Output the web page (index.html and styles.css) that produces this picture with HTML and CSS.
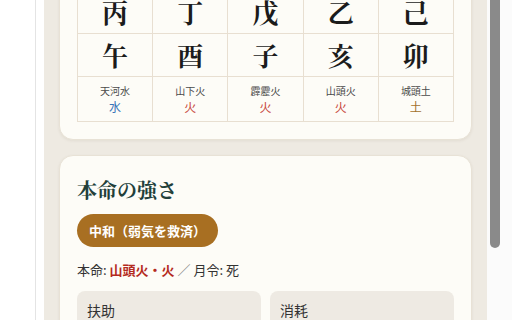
FILE: index.html
```html
<!DOCTYPE html>
<html lang="ja">
<head>
<meta charset="utf-8">
<link rel="stylesheet" href="styles.css">
</head>
<body>
<div class="app">
  <div class="side"></div>
  <div class="spacer"></div>
  <main class="main">
    <div class="stack">
      <section class="card">
        <table class="pillars">
          <tr class="big">
            <td>丙</td><td>丁</td><td>戊</td><td>乙</td><td>己</td>
          </tr>
          <tr class="big">
            <td>午</td><td>酉</td><td>子</td><td>亥</td><td>卯</td>
          </tr>
          <tr class="nayin">
            <td><span class="name">天河水</span><span class="el water">水</span></td>
            <td><span class="name">山下火</span><span class="el fire">火</span></td>
            <td><span class="name">霹靂火</span><span class="el fire">火</span></td>
            <td><span class="name">山頭火</span><span class="el fire">火</span></td>
            <td><span class="name">城頭土</span><span class="el earth">土</span></td>
          </tr>
        </table>
      </section>
      <section class="card">
        <h2 class="title">本命の強さ</h2>
        <div class="badge">中和（弱気を救済）</div>
        <p class="meta">本命: <strong class="hl">山頭火・火</strong> <span class="sep">／</span> 月令: 死</p>
        <div class="boxes">
          <div class="box">扶助</div>
          <div class="box">消耗</div>
        </div>
      </section>
    </div>
  </main>
  <div class="track"><div class="thumb"></div></div>
</div>
</body>
</html>
```
FILE: styles.css
```css
html, body {
  margin: 0;
  padding: 0;
  background: #ffffff;
}
body {
  font-family: "Noto Sans CJK JP", "Noto Sans", sans-serif;
  color: #333;
  width: 512px;
  height: 320px;
  overflow: hidden;
}
.app {
  display: flex;
  height: 320px;
}
.side {
  width: 35px;
  flex: none;
  border-right: 1px solid #e4e4e4;
  background: #fff;
}
.spacer {
  width: 8px;
  flex: none;
  background: #fff;
}
.main {
  width: 443px;
  flex: none;
  background: #eeeae2;
  overflow: hidden;
  padding: 0 15px;
  box-sizing: border-box;
}
.stack {
  display: flex;
  flex-direction: column;
  gap: 15px;
  margin-top: -28px;
}
.card {
  background: #fdfcf7;
  border: 1px solid #e8e2d6;
  border-radius: 14px;
  padding: 17px;
  box-shadow: 0 1px 3px rgba(90, 70, 40, 0.08);
}
.pillars {
  width: 100%;
  border-collapse: collapse;
  table-layout: fixed;
}
.pillars td {
  border: 1px solid #e8dfd1;
  text-align: center;
  padding: 0;
}
.big td {
  font-family: "Noto Serif CJK JP", "Noto Serif CJK SC", "Liberation Serif", serif;
  font-size: 26px;
  font-weight: 700;
  line-height: 42px;
  color: #1b1b1b;
}
.nayin td {
  padding: 6px 0;
  line-height: 16px;
}
.name {
  display: block;
  font-size: 10px;
  color: #4a4a4a;
}
.el {
  display: block;
  font-size: 12px;
}
.water { color: #3a74b8; }
.fire { color: #c8463b; }
.earth { color: #a4712c; }
.title {
  margin: 3px 0 10px;
  font-family: "Noto Serif CJK JP", "Noto Serif CJK SC", "Liberation Serif", serif;
  font-size: 20px;
  line-height: 28px;
  font-weight: 700;
  color: #22403a;
}
.badge {
  display: inline-block;
  background: #a86f22;
  color: #fff;
  font-weight: 700;
  font-size: 13px;
  line-height: 33px;
  padding: 0 12px;
  border-radius: 17px;
}
.meta {
  margin: 13px 0 11px;
  font-size: 13px;
  line-height: 20px;
  color: #333;
}
.hl {
  color: #b42a20;
  font-weight: 700;
}
.sep {
  color: #888;
}
.boxes {
  display: grid;
  grid-template-columns: 1fr 1fr;
  gap: 9px;
}
.box {
  background: #eeeae3;
  border-radius: 8px;
  padding: 9px 10px;
  font-size: 14px;
  line-height: 20px;
  height: 60px;
  color: #333;
}
.track {
  width: 25px;
  flex: none;
  background: #fbfbfb;
}
.thumb {
  margin-left: 3px;
  width: 10px;
  height: 248px;
  background: #8a8a8a;
  border-radius: 0 0 5px 5px;
}
```
